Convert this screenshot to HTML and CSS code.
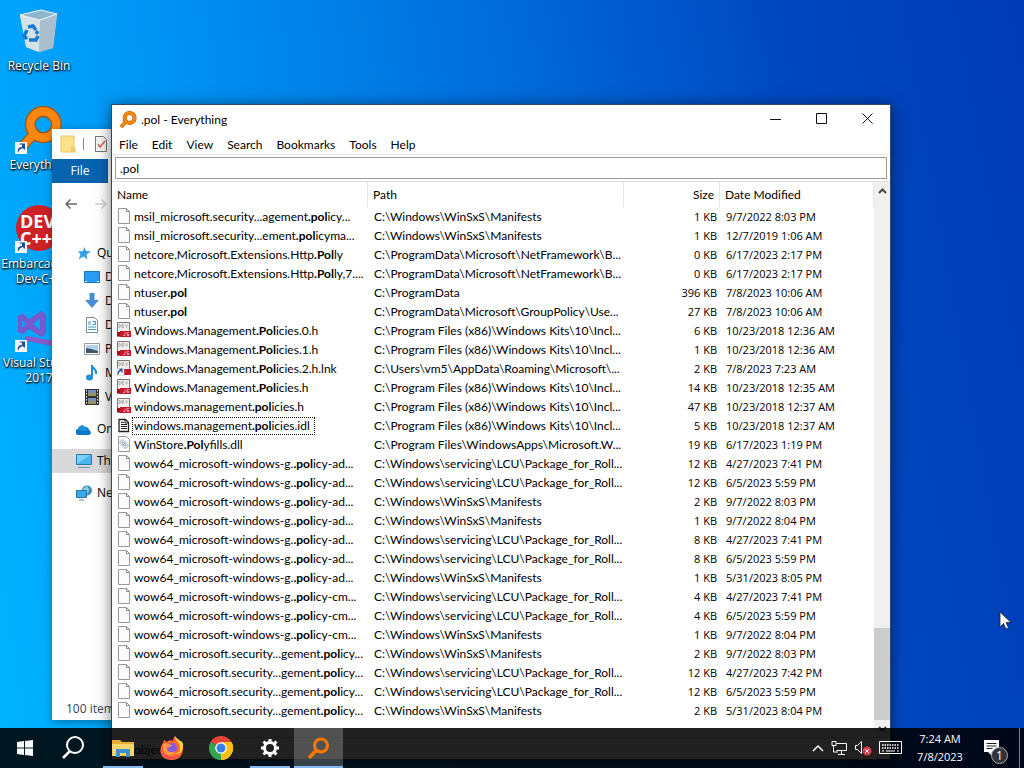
FILE: index.html
```html
<!DOCTYPE html>
<html lang="en">
<head>
<meta charset="utf-8">
<title>.pol - Everything</title>
<link rel="stylesheet" href="styles.css">
</head>
<body>
<svg class="sprites" aria-hidden="true">
  <symbol id="file" viewBox="0 1 16 18"><path d="M2.500 1.500h8l3 3v12h-11z" fill="#fbfbfb" stroke="#999"/><path d="M10.500 1.500v3h3" fill="none" stroke="#888"/></symbol>
  <symbol id="dev" viewBox="0 1 16 18"><path d="M1.500 1.500h12v14h-12z" fill="#f3efec" stroke="#777"/><path d="M3 3.500v3h1l1-1-1-2zM8 3.500H6v3h2M6 5h2M9.500 3.500l1 3 1-3" fill="none" stroke="#999" stroke-width=".7"/><path d="M4 10h11v6H4z" fill="#c9182c"/><path d="M1 11h3v4H1z" fill="#a90c20"/><path d="M9 11.500v3H7M13 11.500h-2v2h2v1h-2" fill="none" stroke="#f3b0b4" stroke-width=".8"/></symbol>
  <symbol id="devlink" viewBox="0 1 16 18"><path d="M1.500 1.500h12v14h-12z" fill="#f3efec" stroke="#777"/><path d="M3 3.500v3h1l1-1-1-2zM8 3.500H6v3h2M6 5h2M9.500 3.500l1 3 1-3" fill="none" stroke="#999" stroke-width=".7"/><path d="M8 10h7v6H8z" fill="#c9182c"/><path d="M1 9.500h7v7H1z" fill="#fff" stroke="#bbb" stroke-width=".5"/><path d="M2 15.500c0-3 1-4 3-4M3.500 10.500H6v3" fill="none" stroke="#234a94" stroke-width="1.300"/></symbol>
  <symbol id="idl" viewBox="0 0 16 18"><path d="M3 2.500h6.500l3 3v9H3z" fill="#fff" stroke="#222" stroke-width="1.300"/><path d="M9 3v3h3M5 7.500h6M5 9.500h6M5 11.500h6M5 5.500h3" fill="none" stroke="#222"/></symbol>
  <symbol id="dll" viewBox="0 1 16 18"><path d="M2.500 1.500h8l3 3v12h-11z" fill="#fbfbfb" stroke="#999"/><g fill="none" stroke="#8395a2"><circle cx="6.500" cy="7.500" r="2.500" stroke-dasharray="1.200 .5"/><circle cx="6.500" cy="7.500" r=".7"/><circle cx="9.500" cy="10.500" r="2.500" stroke-dasharray="1.200 .5"/><circle cx="9.500" cy="10.500" r=".7"/></g></symbol>
  <symbol id="glass" viewBox="0 0 44 44"><path d="M19 24L5 39" stroke="#a85408" stroke-width="9"/><circle cx="26" cy="17" r="12" fill="none" stroke="#a85408" stroke-width="10"/><path d="M19 24L5 39" stroke="#ff8610" stroke-width="7"/><circle cx="26" cy="17" r="12" fill="none" stroke="#ff8610" stroke-width="7.500"/></symbol>
  <symbol id="shortcut" viewBox="0 0 12 12"><path d="M0 0h12v12H0z" fill="#f4f7fa"/><path d="M3 11c-1-4 1-6 4-6V2.500H4.500V1.500H10v6H9L8 6C5 7 4 8 3 11z" fill="#174e9b"/></symbol>
</svg>

<main class="desktop">
  <nav class="shortcuts" aria-label="Desktop">
    <a class="shortcut" href="#recycle">
      <svg class="pic" viewBox="0 0 48 48"><path d="M5 8l21-5 16 4-4 34-14 4-13-5z" fill="#b8d4e3"/><path d="M5 8l20 5-1 32-13-5z" fill="#d5e3e9"/><path d="M25 13l17-6-4 34-14 4z" fill="#a9bfcd"/><path d="M5 8l21-5 16 4-17 6z" fill="#8eb7cd" stroke="#eef6f9"/><path d="M13 20l5-1 3 4M12 23l-3 6 3 3M14 33h7l2-4M21 27l2-3" fill="none" stroke="#1a7ace" stroke-width="3.500"/></svg>
      <span>Recycle Bin</span>
    </a>
    <a class="shortcut" href="#everything">
      <span class="pic"><svg class="full" viewBox="0 0 44 44"><use href="#glass"/></svg><svg class="arrow"><use href="#shortcut"/></svg></span>
      <span>Everything</span>
    </a>
    <a class="shortcut" href="#devcpp">
      <span class="pic"><svg class="full" viewBox="0 0 48 48"><circle cx="24" cy="23" r="23" fill="#cb2127"/><text class="devmark" x="5" y="23">DEV</text><text class="devmark" x="5" y="40">C++</text></svg><svg class="arrow"><use href="#shortcut"/></svg></span>
      <span>Embarcadero Dev-C++</span>
    </a>
    <a class="shortcut" href="#vs">
      <span class="pic"><svg class="full" viewBox="0 0 48 48"><path d="M3 12l5-2 6 5L26 7l5 3v20l-5 3-12-8-6 5-5-2zM25 14l-7 6 7 6zM7 16v8l4-4z" fill="#7759ce" fill-rule="evenodd"/><path d="M10 34l36 7V16" fill="none" stroke="#8a59c9" stroke-width="5"/></svg><svg class="arrow"><use href="#shortcut"/></svg></span>
      <span>Visual Studio 2017</span>
    </a>
  </nav>

  <section class="window explorer" aria-label="File Explorer">
    <header class="quickbar">
      <svg width="16" height="18" viewBox="0 0 16 18"><path d="M1 1h13v11l1 1v4H1z" fill="#fce28a" stroke="#e9c55c"/><path d="M11 12h4v5h-4z" fill="#efcf6b"/></svg>
      <span class="tick"></span>
      <svg width="14" height="18" viewBox="0 0 14 18"><path d="M1.500 1.500h8l3 3v12h-11z" fill="#f5f5f5" stroke="#777"/><path d="M4 9l2 3 5-6" fill="none" stroke="#d3605a" stroke-width="1.500"/></svg>
    </header>
    <button class="filetab">File</button>
    <div class="history">
      <svg width="14" height="12" viewBox="0 0 14 12"><path d="M13 6H2M6.500 1.500L2 6l4.500 4.500" fill="none" stroke="#666" stroke-width="1.500"/></svg>
      <svg width="14" height="12" viewBox="0 0 14 12"><path d="M1 6h11M7.500 1.500L12 6l-4.500 4.500" fill="none" stroke="#d4d4d4" stroke-width="1.500"/></svg>
    </div>
    <ul class="tree">
      <li class="top"><svg viewBox="0 0 16 16"><path d="M8.500 2l1.500 4 5 .5-4.500 3 1 5-4-3-5 3 2-5L2 6.500l5-.5z" fill="#399ee8"/></svg>Quick access</li>
      <li><svg viewBox="0 0 16 16"><path d="M.5 2.500h15v11H.5z" fill="#2a9cf2" stroke="#1277c4"/><path d="M1 12.500h2m10 0h2" stroke="#fff"/></svg>Desktop</li>
      <li><svg viewBox="0 0 16 16"><path d="M5.500 0h5v7H15l-7 8-7-8h4.500z" fill="#448fdc"/></svg>Downloads</li>
      <li><svg viewBox="0 0 16 16"><path d="M2.500.5h8l3 3v12h-11z" fill="#fff" stroke="#7b8a93"/><path d="M4 5h3M4 7h3M8.500 4.500h3v3h-3M4 10h8M4 12.500h8" fill="none" stroke="#3d9ccc"/></svg>Documents</li>
      <li><svg viewBox="0 0 16 16"><path d="M.5 2.500h15v11H.5z" fill="#fff" stroke="#9a9a9a"/><path d="M2 4h12v8H2z" fill="#b5d2e8"/><path d="M2 7l5 1 7 2v2H2z" fill="#3c566b"/></svg>Pictures</li>
      <li><svg viewBox="0 0 16 16"><path d="M8 0v12M8 1c1 3 5 3 4 8" fill="none" stroke="#1c90db" stroke-width="2"/><ellipse cx="5.500" cy="12.500" rx="3.500" ry="3" fill="#1c90db"/></svg>Music</li>
      <li><svg viewBox="0 0 16 16"><path d="M1 0h14v16H1z" fill="#333"/><path d="M4 1h8v6H4zM4 9h8v6H4z" fill="#7891be"/><path d="M4 5l4-2 4 4H4zM4 13l4-2 4 4H4z" fill="#9c9655"/><path d="M2.500 1v14M13.500 1v14" stroke="#ddd" stroke-dasharray="1.500 1.500"/></svg>Videos</li>
      <li class="top group"><svg viewBox="0 0 16 16"><path d="M3 14a3 3 0 0 1-1-6 4 4 0 0 1 7-2 3.500 3.500 0 0 1 4 3 2.600 2.600 0 0 1 0 5z" fill="#0f78c8"/><path d="M2 8a4 4 0 0 1 7-2l4 3-6 1z" fill="#1a91dc"/></svg>OneDrive</li>
      <li class="top group selected"><svg viewBox="0 0 16 16"><path d="M.5 1.500h15v10H.5z" fill="#4bb5ee" stroke="#287ba8"/><path d="M1 11L14 2H1z" fill="#7fd0f5"/><path d="M2 14.500h12" stroke="#6b94aa"/></svg>This PC</li>
      <li class="top group"><svg viewBox="0 0 16 16"><circle cx="11" cy="5.500" r="5" fill="#3a8db8"/><path d="M7 4l4-3 2 3-1 5" fill="#8bd0e8"/><path d="M.5 5.500h10v7H.5z" fill="#3ba8e8" stroke="#2672aa"/><path d="M3 15h5" stroke="#5e8ca5"/></svg>Network</li>
    </ul>
    <footer class="count">100 items</footer>
  </section>

  <section class="window everything" aria-label="Everything">
    <header class="titlebar">
      <svg width="18" height="18" viewBox="0 0 44 44"><use href="#glass"/></svg>
      <h1>.pol - Everything</h1>
      <div class="controls">
        <button aria-label="Minimize"><svg width="11" height="11" viewBox="0 0 11 11"><path d="M0 6.500h11"/></svg></button>
        <button aria-label="Maximize"><svg width="11" height="11" viewBox="0 0 11 11"><path d="M.5.5h10v10H.5z"/></svg></button>
        <button aria-label="Close"><svg width="11" height="11" viewBox="0 0 11 11"><path d="M.5.5l10 10M10.500.5l-10 10"/></svg></button>
      </div>
    </header>
    <nav class="menu" aria-label="Menu"><button>File</button><button>Edit</button><button>View</button><button>Search</button><button>Bookmarks</button><button>Tools</button><button>Help</button></nav>
    <div class="searchrow"><input type="text" value=".pol" aria-label="Search"></div>
    <div class="results">
      <div class="list">
      <table>
        <colgroup><col class="cname"><col class="cpath"><col class="csize"><col></colgroup>
        <thead><tr><th>Name</th><th>Path</th><th>Size</th><th>Date Modified</th></tr></thead>
        <tbody>
          <tr><td><svg><use href="#file"/></svg><span>msil_microsoft.security...agement<b>.pol</b>icy...</span></td><td>C:\Windows\WinSxS\Manifests</td><td>1 KB</td><td>9/7/2022 8:03 PM</td></tr>
          <tr><td><svg><use href="#file"/></svg><span>msil_microsoft.security...ement<b>.pol</b>icyma...</span></td><td>C:\Windows\WinSxS\Manifests</td><td>1 KB</td><td>12/7/2019 1:06 AM</td></tr>
          <tr><td><svg><use href="#file"/></svg><span>netcore,Microsoft.Extensions.Http<b>.Pol</b>ly</span></td><td>C:\ProgramData\Microsoft\NetFramework\B...</td><td>0 KB</td><td>6/17/2023 2:17 PM</td></tr>
          <tr><td><svg><use href="#file"/></svg><span>netcore,Microsoft.Extensions.Http<b>.Pol</b>ly,7....</span></td><td>C:\ProgramData\Microsoft\NetFramework\B...</td><td>0 KB</td><td>6/17/2023 2:17 PM</td></tr>
          <tr><td><svg><use href="#file"/></svg><span>ntuser<b>.pol</b></span></td><td>C:\ProgramData</td><td>396 KB</td><td>7/8/2023 10:06 AM</td></tr>
          <tr><td><svg><use href="#file"/></svg><span>ntuser<b>.pol</b></span></td><td>C:\ProgramData\Microsoft\GroupPolicy\Use...</td><td>27 KB</td><td>7/8/2023 10:06 AM</td></tr>
          <tr><td><svg><use href="#dev"/></svg><span>Windows.Management<b>.Pol</b>icies.0.h</span></td><td>C:\Program Files (x86)\Windows Kits\10\Incl...</td><td>6 KB</td><td>10/23/2018 12:36 AM</td></tr>
          <tr><td><svg><use href="#dev"/></svg><span>Windows.Management<b>.Pol</b>icies.1.h</span></td><td>C:\Program Files (x86)\Windows Kits\10\Incl...</td><td>1 KB</td><td>10/23/2018 12:36 AM</td></tr>
          <tr><td><svg><use href="#devlink"/></svg><span>Windows.Management<b>.Pol</b>icies.2.h.lnk</span></td><td>C:\Users\vm5\AppData\Roaming\Microsoft\...</td><td>2 KB</td><td>7/8/2023 7:23 AM</td></tr>
          <tr><td><svg><use href="#dev"/></svg><span>Windows.Management<b>.Pol</b>icies.h</span></td><td>C:\Program Files (x86)\Windows Kits\10\Incl...</td><td>14 KB</td><td>10/23/2018 12:35 AM</td></tr>
          <tr><td><svg><use href="#dev"/></svg><span>windows.management<b>.pol</b>icies.h</span></td><td>C:\Program Files (x86)\Windows Kits\10\Incl...</td><td>47 KB</td><td>10/23/2018 12:37 AM</td></tr>
          <tr class="focused"><td><svg><use href="#idl"/></svg><span>windows.management<b>.pol</b>icies.idl</span></td><td>C:\Program Files (x86)\Windows Kits\10\Incl...</td><td>5 KB</td><td>10/23/2018 12:37 AM</td></tr>
          <tr><td><svg><use href="#dll"/></svg><span>WinStore<b>.Pol</b>yfills.dll</span></td><td>C:\Program Files\WindowsApps\Microsoft.W...</td><td>19 KB</td><td>6/17/2023 1:19 PM</td></tr>
          <tr><td><svg><use href="#file"/></svg><span>wow64_microsoft-windows-g.<b>.pol</b>icy-ad...</span></td><td>C:\Windows\servicing\LCU\Package_for_Roll...</td><td>12 KB</td><td>4/27/2023 7:41 PM</td></tr>
          <tr><td><svg><use href="#file"/></svg><span>wow64_microsoft-windows-g.<b>.pol</b>icy-ad...</span></td><td>C:\Windows\servicing\LCU\Package_for_Roll...</td><td>12 KB</td><td>6/5/2023 5:59 PM</td></tr>
          <tr><td><svg><use href="#file"/></svg><span>wow64_microsoft-windows-g.<b>.pol</b>icy-ad...</span></td><td>C:\Windows\WinSxS\Manifests</td><td>2 KB</td><td>9/7/2022 8:03 PM</td></tr>
          <tr><td><svg><use href="#file"/></svg><span>wow64_microsoft-windows-g.<b>.pol</b>icy-ad...</span></td><td>C:\Windows\WinSxS\Manifests</td><td>1 KB</td><td>9/7/2022 8:04 PM</td></tr>
          <tr><td><svg><use href="#file"/></svg><span>wow64_microsoft-windows-g.<b>.pol</b>icy-ad...</span></td><td>C:\Windows\servicing\LCU\Package_for_Roll...</td><td>8 KB</td><td>4/27/2023 7:41 PM</td></tr>
          <tr><td><svg><use href="#file"/></svg><span>wow64_microsoft-windows-g.<b>.pol</b>icy-ad...</span></td><td>C:\Windows\servicing\LCU\Package_for_Roll...</td><td>8 KB</td><td>6/5/2023 5:59 PM</td></tr>
          <tr><td><svg><use href="#file"/></svg><span>wow64_microsoft-windows-g.<b>.pol</b>icy-ad...</span></td><td>C:\Windows\WinSxS\Manifests</td><td>1 KB</td><td>5/31/2023 8:05 PM</td></tr>
          <tr><td><svg><use href="#file"/></svg><span>wow64_microsoft-windows-g.<b>.pol</b>icy-cm...</span></td><td>C:\Windows\servicing\LCU\Package_for_Roll...</td><td>4 KB</td><td>4/27/2023 7:41 PM</td></tr>
          <tr><td><svg><use href="#file"/></svg><span>wow64_microsoft-windows-g.<b>.pol</b>icy-cm...</span></td><td>C:\Windows\servicing\LCU\Package_for_Roll...</td><td>4 KB</td><td>6/5/2023 5:59 PM</td></tr>
          <tr><td><svg><use href="#file"/></svg><span>wow64_microsoft-windows-g.<b>.pol</b>icy-cm...</span></td><td>C:\Windows\WinSxS\Manifests</td><td>1 KB</td><td>9/7/2022 8:04 PM</td></tr>
          <tr><td><svg><use href="#file"/></svg><span>wow64_microsoft.security...gement<b>.pol</b>icy...</span></td><td>C:\Windows\WinSxS\Manifests</td><td>2 KB</td><td>9/7/2022 8:03 PM</td></tr>
          <tr><td><svg><use href="#file"/></svg><span>wow64_microsoft.security...gement<b>.pol</b>icy...</span></td><td>C:\Windows\servicing\LCU\Package_for_Roll...</td><td>12 KB</td><td>4/27/2023 7:42 PM</td></tr>
          <tr><td><svg><use href="#file"/></svg><span>wow64_microsoft.security...gement<b>.pol</b>icy...</span></td><td>C:\Windows\servicing\LCU\Package_for_Roll...</td><td>12 KB</td><td>6/5/2023 5:59 PM</td></tr>
          <tr><td><svg><use href="#file"/></svg><span>wow64_microsoft.security...gement<b>.pol</b>icy...</span></td><td>C:\Windows\WinSxS\Manifests</td><td>2 KB</td><td>5/31/2023 8:04 PM</td></tr>
        </tbody>
      </table>
      </div>
      <div class="scrollbar">
        <button aria-label="Scroll up"><svg width="9" height="6" viewBox="0 0 9 6"><path d="M1 5l3.500-3.500L8 5"/></svg></button>
        <span class="thumb"></span>
        <button aria-label="Scroll down"><svg width="9" height="6" viewBox="0 0 9 6"><path d="M1 1l3.500 3.500L8 1"/></svg></button>
      </div>
    </div>
    <footer class="status">objects</footer>
  </section>

  <svg class="pointer" width="14" height="20" viewBox="0 0 14 20"><path d="M1 1v15l3.500-3.500L7 18l2.500-1-2.500-5.500h5z" fill="#fff" stroke="#222" stroke-width=".8"/></svg>
</main>

<footer class="taskbar">
  <button aria-label="Start"><svg width="16" height="16" viewBox="0 0 16 16"><path d="M0 2l7-1v6.500H0zM8 1l8-1v7.500H8zM0 8.500h7V15l-7-1zM8 8.500h8V16l-8-1z" fill="#fff"/></svg></button>
  <button aria-label="Search"><svg width="24" height="24" viewBox="0 0 24 24"><circle cx="13" cy="9" r="8" fill="none" stroke="#fff" stroke-width="2"/><path d="M8 15l-7 7" stroke="#fff" stroke-width="2.500"/></svg></button>
  <button class="open" aria-label="File Explorer"><svg width="22" height="20" viewBox="0 0 22 20"><path d="M0 2h8l2 2h12v14H0z" fill="#e8ad35"/><path d="M0 6h22v12H0z" fill="#fbd56c"/><path d="M4 19v-8h14v8h-4v-4H8v4z" fill="#3c91cf"/></svg></button>
  <button aria-label="Firefox"><svg width="24" height="24" viewBox="0 0 24 24"><path d="M3 7l1-3 3 2c2-2 4-2 6-1 0-2 1-4 2-5 1 3 4 4 5 6l1-1c4 8 2 19-9 19C0 24-2 14 3 7z" fill="#ff6530"/><path d="M15 0c0 5 5 6 5 12 0 4-3 6-7 6 8 2 11-5 10-10 0-3-6-4-8-8z" fill="#ffd33e"/><circle cx="12" cy="12" r="5" fill="#8659dc"/><path d="M3 8c3-2 5 1 9 1-2 3-4 1-5 4 1 4 6 4 8 2-1 6-10 6-12-1z" fill="#ff9640"/><path d="M2 12c0 9 10 12 17 7-7 7-18 3-17-7z" fill="#e73377"/></svg></button>
  <button aria-label="Chrome"><svg width="24" height="24" viewBox="0 0 24 24"><path d="M12 12L1.600 6a12 12 0 0 1 20.800 0z" fill="#e84436"/><path d="M12 12h-.2L22.400 6A12 12 0 0 1 12 24z" fill="#fbc117"/><path d="M12 12v12A12 12 0 0 1 1.600 6z" fill="#33a452"/><path d="M12 6h10.400A12 12 0 0 1 12 24l5-9z" fill="#fbc117"/><circle cx="12" cy="12" r="5.800" fill="#fff"/><circle cx="12" cy="12" r="4.500" fill="#397de9"/></svg></button>
  <button class="open" aria-label="Settings"><svg width="20" height="20" viewBox="0 0 20 20"><circle cx="10" cy="10" r="5.500" fill="none" stroke="#fff" stroke-width="3"/><g stroke="#fff" stroke-width="3"><path d="M10 1v3M10 16v3M1 10h3M16 10h3M3.500 3.500l2.300 2.300M14.200 14.200l2.300 2.300M3.500 16.500l2.300-2.300M14.200 5.800l2.300-2.300"/></g></svg></button>
  <button class="open active" aria-label="Everything"><svg width="23" height="23" viewBox="0 0 23 23"><circle cx="14" cy="8.500" r="6.500" fill="none" stroke="#ff7800" stroke-width="3"/><path d="M9.500 13L2 21" stroke="#ff7800" stroke-width="3.500"/></svg></button>
  <div class="tray">
    <svg width="12" height="8" viewBox="0 0 12 8"><path d="M1 7l5-5 5 5" fill="none" stroke="#fff" stroke-width="1.500"/></svg>
    <svg width="17" height="14" viewBox="0 0 17 14"><path d="M5.500 2.500h10v7h-10M7 13.500h7M10.500 10v3M1 .5h4v4H1zM2.500 5v6H7" fill="none" stroke="#fff"/></svg>
    <svg width="17" height="16" viewBox="0 0 17 16"><path d="M.5 5.500h2l4-4v12l-4-4h-2z" fill="none" stroke="#fff"/><circle cx="12" cy="11" r="4.500" fill="#d63a46"/><path d="M10 9l4 4M14 9l-4 4" stroke="#fff"/></svg>
    <svg width="23" height="14" viewBox="0 0 23 14"><path d="M.5.5h22v12H.5z" fill="none" stroke="#fff"/><path d="M3 4h17M3 7h17" stroke="#fff" stroke-width="1.500" stroke-dasharray="1.500 1"/><path d="M3 10h2m2 0h9m2 0h2" stroke="#fff"/></svg>
    <time class="clock"><span>7:24 AM</span><span>7/8/2023</span></time>
    <button class="notes" aria-label="Notifications"><svg width="18" height="18" viewBox="0 0 18 18"><path d="M1 1h15v12H9v4l-4-4H1z" fill="#fff"/><path d="M3.500 4.500h10M3.500 7h10M3.500 9.500h6" stroke="#18202a"/></svg><span class="badge">1</span></button>
  </div>
</footer>
</body>
</html>
```
FILE: styles.css
```css
* { box-sizing: border-box; }
html, body { height: 100%; }
body {
  margin: 0;
  overflow: hidden;
  position: relative;
  font-family: "Open Sans", "Noto Sans", sans-serif;
  font-size: 12px;
  line-height: 16px;
  color: #000;
}
button { border: 0; padding: 0; background: none; font: inherit; color: inherit; }
h1 { margin: 0; font-size: 12px; font-weight: 400; }
.sprites { position: absolute; width: 0; height: 0; }

.desktop {
  position: relative;
  height: 100%;
  background: linear-gradient(80deg, #00b5ff 0%, #009cf8 18%, #0072df 50%, #0048c0 78%, #003bb6 100%);
}
.shortcuts { display: flex; flex-direction: column; width: 78px; padding-top: 7px; }
.shortcut {
  display: flex;
  flex-direction: column;
  align-items: center;
  gap: 3px;
  height: 99px;
  color: #fff;
  text-align: center;
  text-decoration: none;
  line-height: 15px;
  text-shadow: 1px 1px 2px #000, 0 1px 2px #000;
}
.pic { position: relative; flex: none; width: 48px; height: 48px; }
.full { width: 100%; height: 100%; }
.arrow { position: absolute; left: 0; bottom: 0; width: 12px; height: 12px; }
.devmark { font: 700 18px "Open Sans", sans-serif; fill: #fff; text-shadow: none; }

.window { position: absolute; display: flex; flex-direction: column; background: #fff; }
.explorer { left: 52px; top: 129px; bottom: 48px; width: 400px; box-shadow: 0 2px 8px #0005; }
.quickbar { display: flex; align-items: center; gap: 7px; height: 30px; padding-left: 8px; }
.tick { width: 1px; height: 12px; margin: 0 3px 0 0; background: #888; }
.filetab { width: 56px; height: 24px; background: #0863b1; color: #fff; }
.history { display: flex; align-items: center; gap: 16px; height: 42px; padding-left: 12px; }
.tree { flex: 1; margin: 0; padding: 16px 0 0; list-style: none; }
.tree li { display: flex; align-items: center; gap: 5px; height: 24px; padding-left: 32px; white-space: nowrap; }
.tree svg { width: 16px; height: 16px; flex: none; }
.tree .top { padding-left: 24px; }
.tree .group { margin-top: 8px; }
.tree .selected { background: #d9d9d9; }
.count { height: 24px; padding: 5px 14px; color: #33475b; }

.everything {
  left: 111px;
  right: 133px;
  top: 104px;
  bottom: 8px;
  border: 1px solid #2a4b66;
  box-shadow: 0 2px 14px #0008;
  font-family: Lato, "Open Sans", sans-serif;
}
.titlebar { display: flex; align-items: center; gap: 4px; height: 30px; padding-left: 7px; }
.titlebar h1 { flex: 1; }
.controls { display: flex; height: 100%; }
.controls button { width: 46px; }
.controls svg, .scrollbar svg { fill: none; stroke: #111; }
.menu { display: flex; gap: 14px; height: 20px; padding-left: 7px; border-bottom: 1px solid #e8e8e8; }
.searchrow { padding: 2px 3px; border-bottom: 1px solid #ddd; }
.searchrow input { display: block; width: 100%; height: 22px; padding: 0 4px; border: 1px solid #9a9a9a; background: #fff; font: inherit; color: #000; }
.results { flex: 1; min-height: 0; display: flex; }
.list { flex: 1; min-width: 0; overflow: hidden; }
table { width: 100%; table-layout: fixed; border-collapse: separate; border-spacing: 0; }
.cname, .cpath { width: 256px; }
.csize { width: 96px; }
th { height: 25px; padding: 0 5px; font-weight: 400; text-align: left; border-right: 1px solid #e6e6e6; }
td { height: 19px; padding: 0 0 0 6px; white-space: nowrap; overflow: hidden; }
td:first-child { display: flex; align-items: center; padding-left: 4px; }
td:first-child svg { width: 16px; height: 18px; flex: none; }
td span { padding: 0 1px; border: 1px solid transparent; }
th:nth-child(3), td:nth-child(3) { text-align: right; }
td:nth-child(3) { padding-right: 3px; }
td:nth-child(n+3) { font-family: "Open Sans", "Noto Sans", sans-serif; font-size: 11px; }
.focused span { padding-right: 4px; border: 1px dotted #111; }
.scrollbar { width: 16px; display: flex; flex-direction: column; background: #f0f0f0; }
.scrollbar button { height: 17px; }
.scrollbar svg { display: block; margin: 0 auto; stroke: #444; stroke-width: 2; }
.thumb { height: 92px; margin-top: auto; background: #cdcdcd; }
.status { height: 22px; padding: 4px 22px 0; border-top: 1px solid #d7d7d7; background: #fff; }
.pointer { position: absolute; right: 11px; bottom: 137px; }

.taskbar {
  position: absolute;
  left: 0;
  right: 0;
  bottom: 0;
  height: 40px;
  display: flex;
  background: rgba(0, 0, 0, 0.87);
  color: #fff;
}
.taskbar > button { display: grid; place-items: center; width: 49px; }
.taskbar > .open { background: linear-gradient(#85b9ee, #85b9ee) bottom / 40px 2px no-repeat; }
.taskbar > .active { background-color: #ffffff38; background-size: 100% 2px; }
.tray { flex: 1; display: flex; align-items: center; justify-content: flex-end; gap: 7px; }
.clock { display: flex; flex-direction: column; width: 62px; text-align: center; font-size: 11px; line-height: 18px; }
.notes { position: relative; width: 42px; height: 100%; padding-left: 5px; border-right: 1px solid #7b8088; margin-right: 4px; text-align: left; }
.notes svg { display: block; }
.badge { position: absolute; left: 13px; bottom: 4px; width: 17px; height: 17px; border: 1px solid #aaa; border-radius: 50%; background: #30343a; line-height: 15px; text-align: center; }
```
